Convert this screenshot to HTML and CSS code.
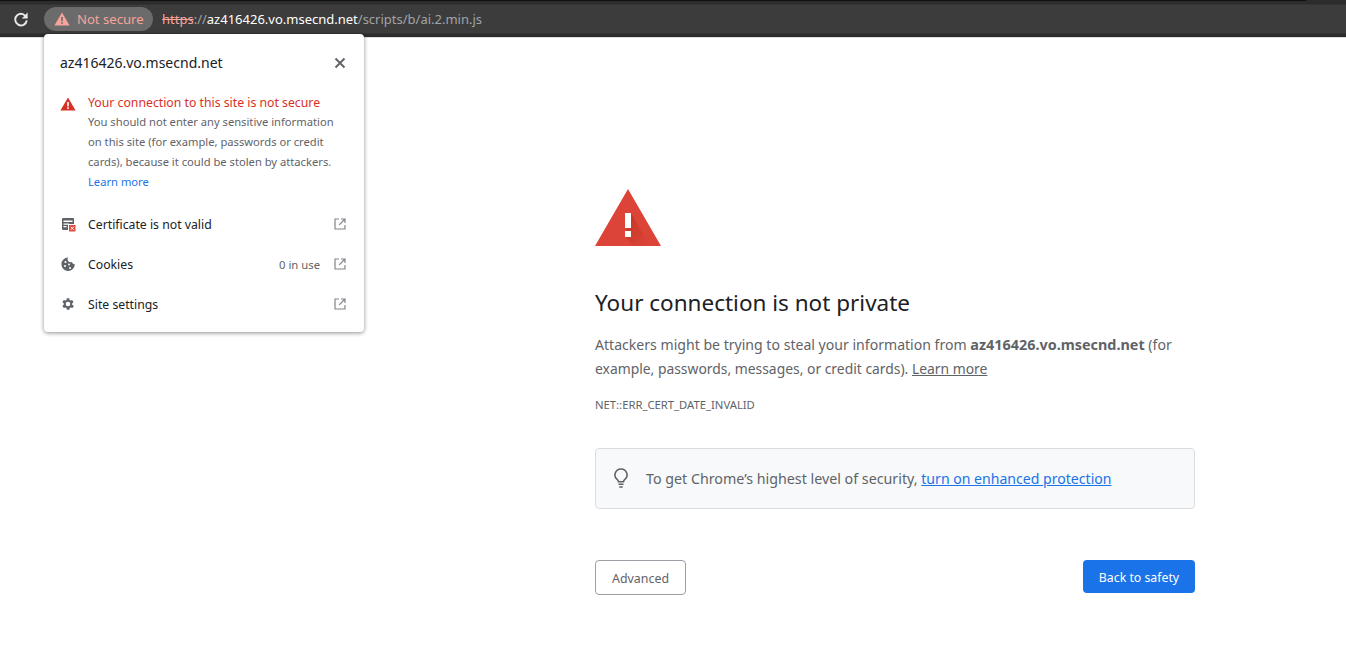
FILE: index.html
```html
<!DOCTYPE html>
<html lang="en">
<head>
<meta charset="utf-8">
<title>Privacy error</title>
<link rel="stylesheet" href="styles.css">
</head>
<body>
<header class="toolbar">
  <svg class="reload" viewBox="0 0 16 16" width="16" height="16"><path d="M13.6 6.9A5.8 5.8 0 1 0 13.8 9.4" fill="none" stroke="#e8eaed" stroke-width="1.9"/><path d="M14.6 1.6v5.8H8.8z" fill="#e8eaed"/></svg>
  <div class="chip">
    <svg class="chip-icon" viewBox="0 0 16 14" width="16" height="14"><path d="M8 0.5 15.6 13.5H0.4z" fill="#f6a49c"/><rect x="7.2" y="5" width="1.6" height="4.4" fill="#6b6b6b"/><rect x="7.2" y="10.3" width="1.6" height="1.6" fill="#6b6b6b"/></svg>
    <span class="chip-text">Not secure</span>
  </div>
  <div class="url"><span class="scheme">https</span><span class="dim">://</span><span class="host">az416426.vo.msecnd.net</span><span class="dim">/scripts/b/ai.2.min.js</span></div>
</header>

<aside class="popup">
  <div class="popup-head">
    <span class="popup-host">az416426.vo.msecnd.net</span>
    <svg class="popup-close" viewBox="0 0 12 12" width="12" height="12"><path d="M1.5 1.5l9 9M10.5 1.5l-9 9" stroke="#5f6368" stroke-width="1.9" fill="none"/></svg>
  </div>
  <div class="security">
    <svg class="sec-icon" viewBox="0 0 16 14" width="16" height="14"><path d="M8 0.5 15.6 13.5H0.4z" fill="#d93025"/><rect x="7.2" y="5" width="1.6" height="4.4" fill="#fff"/><rect x="7.2" y="10.3" width="1.6" height="1.6" fill="#fff"/></svg>
    <div class="sec-body">
      <div class="sec-title">Your connection to this site is not secure</div>
      <div class="sec-text">You should not enter any sensitive information on this site (for example, passwords or credit cards), because it could be stolen by attackers.</div>
      <a class="sec-link">Learn more</a>
    </div>
  </div>
  <div class="pop-row">
    <svg class="row-icon" viewBox="0 0 16 16" width="16" height="16"><rect x="2" y="2" width="12" height="12" rx="1" fill="#5f6368"/><path d="M3.5 4.5h9v1.4h-9zM3.5 7.5H9v1.3H3.5zM3.5 10h3v1.3h-3z" fill="#fff"/><rect x="8.5" y="8.5" width="7.5" height="7.5" fill="#e04b3f" stroke="#fff" stroke-width="1"/><path d="M10.800 10.800l3 3M13.800 10.800l-3 3" stroke="#fff" stroke-width="1"/></svg>
    <span class="row-label">Certificate is not valid</span>
    <svg class="ext" viewBox="0 0 12 12" width="12" height="12"><path d="M5 1H1v10h10V7" fill="none" stroke="#80868b" stroke-width="1.2"/><path d="M7 1h4v4M11 1 5.2 6.8" fill="none" stroke="#80868b" stroke-width="1.2"/></svg>
  </div>
  <div class="pop-row">
    <svg class="row-icon" viewBox="0 0 16 16" width="16" height="16"><path d="M8 1.5a6.7 6.7 0 1 0 6.8 6.8 3 3 0 0 1-2.900-2.300A3.100 3.100 0 0 1 8 1.500z" fill="#5f6368"/><circle cx="5.500" cy="6" r="1.100" fill="#fff"/><circle cx="5" cy="10" r="1" fill="#fff"/><circle cx="9" cy="8.500" r="0.900" fill="#fff"/><circle cx="10" cy="12" r="1" fill="#fff"/></svg>
    <span class="row-label">Cookies</span>
    <span class="row-meta">0 in use</span>
    <svg class="ext" viewBox="0 0 12 12" width="12" height="12"><path d="M5 1H1v10h10V7" fill="none" stroke="#80868b" stroke-width="1.2"/><path d="M7 1h4v4M11 1 5.2 6.8" fill="none" stroke="#80868b" stroke-width="1.2"/></svg>
  </div>
  <div class="pop-row">
    <svg class="row-icon" viewBox="0 0 24 24" width="16" height="16"><path fill="#5f6368" fill-rule="evenodd" d="M19.400 13a7.600 7.600 0 0 0 0-2l2.100-1.600-2-3.500-2.500 1a7.300 7.300 0 0 0-1.700-1L15.400 3.200h-4l-.4 2.700a7.300 7.300 0 0 0-1.700 1l-2.500-1-2 3.500L6.900 11a7.600 7.600 0 0 0 0 2l-2.100 1.600 2 3.500 2.500-1c.5.400 1.100.7 1.700 1l.4 2.700h4l.4-2.700c.6-.3 1.200-.6 1.700-1l2.500 1 2-3.500zM13.200 15.500a3.500 3.500 0 1 1 0-7 3.500 3.500 0 0 1 0 7z" transform="translate(-1.200 0)"/></svg>
    <span class="row-label">Site settings</span>
    <svg class="ext" viewBox="0 0 12 12" width="12" height="12"><path d="M5 1H1v10h10V7" fill="none" stroke="#80868b" stroke-width="1.2"/><path d="M7 1h4v4M11 1 5.2 6.8" fill="none" stroke="#80868b" stroke-width="1.2"/></svg>
  </div>
</aside>

<main class="interstitial">
  <svg class="alert" viewBox="0 0 66 57" width="66" height="57">
    <defs><linearGradient id="alert-shade" x1="0.100" y1="0" x2="0.800" y2="1"><stop offset="0" stop-color="#a52714" stop-opacity=".5"/><stop offset="1" stop-color="#a52714" stop-opacity="0"/></linearGradient></defs>
    <path d="M33 0 66 57H0z" fill="#db4437"/>
    <path d="M36 24 55 57H38L30 47z" fill="url(#alert-shade)"/>
    <rect x="30" y="24" width="6" height="15" fill="#fff"/>
    <rect x="30" y="42" width="6" height="6" fill="#fff"/>
  </svg>
  <h1 class="title">Your connection is not private</h1>
  <p class="desc">Attackers might be trying to steal your information from <strong>az416426.vo.msecnd.net</strong> (for <span class="desc-tail">example, passwords, messages, or credit cards). <a class="desc-link">Learn more</a></span></p>
  <div class="code">NET::ERR_CERT_DATE_INVALID</div>
  <div class="notice">
    <svg class="bulb" viewBox="0 0 16 22" width="16" height="22"><path d="M8 2a6 6 0 0 0-3.500 10.900c.6.500 1 1.100 1 1.900h5c0-.8.400-1.400 1-1.900A6 6 0 0 0 8 2z" fill="none" stroke="#5f6368" stroke-width="1.600"/><path d="M5.500 17.200h5M6.300 20h3.400" stroke="#5f6368" stroke-width="1.600" fill="none"/></svg>
    <span class="notice-text">To get Chrome’s highest level of security, <a class="notice-link">turn on enhanced protection</a></span>
  </div>
  <div class="actions">
    <button class="btn-adv">Advanced</button>
    <button class="btn-safe">Back to safety</button>
  </div>
</main>
</body>
</html>
```
FILE: styles.css
```css
* { box-sizing: border-box; }
html, body { margin: 0; padding: 0; }
body {
  width: 1346px;
  height: 672px;
  overflow: hidden;
  background: #fff;
  font-family: "Noto Sans", "Open Sans", "Liberation Sans", sans-serif;
  position: relative;
}
.toolbar {
  height: 38px;
  background:
    linear-gradient(#111, #111) no-repeat 0 0 / 1306px 1px,
    linear-gradient(#2c2c2c 0, #2c2c2c 4px, #3c3c3c 5px, #3c3c3c 33px, #2c2c2c 34px, #2c2c2c 37px, #dcdcdc 37px);
  display: flex;
  align-items: center;
  padding: 0 0 0 13px;
}
.reload { flex: none; }
.chip {
  margin-left: 15px;
  width: 109px;
  height: 24px;
  border-radius: 12px;
  background: #6b6b6b;
  display: flex;
  align-items: center;
  padding-left: 10px;
  gap: 7px;
}
.chip-text { color: #f6a49c; font-size: 13.1px; }
.url { margin-left: 9px; font-size: 13px; color: #a0a4a8; white-space: nowrap; }
.scheme { color: #f6a49c; text-decoration: line-through; }
.host { color: #fff; }
.popup {
  position: absolute;
  left: 44px;
  top: 34px;
  width: 320px;
  height: 298px;
  background: #fff;
  border-radius: 4px;
  box-shadow: 0 1px 4px rgba(0,0,0,.45);
  padding: 0 18px 0 16px;
}
.popup-head {
  display: flex;
  justify-content: space-between;
  align-items: center;
  height: 57px;
}
.popup-host { font-size: 14px; color: #202124; }
.security { display: flex; gap: 12px; margin-top: 2px; }
.sec-icon { flex: none; margin-top: 4px; }
.sec-body { width: 248px; }
.sec-title { font-size: 12.25px; color: #d93025; line-height: 19px; white-space: nowrap; }
.sec-text { font-size: 11.2px; color: #5f6368; line-height: 20px; }
.sec-link { font-size: 11.2px; color: #1a73e8; line-height: 20px; display: block; }
.pop-row {
  display: flex;
  align-items: center;
  height: 40px;
  gap: 12px;
}
.security + .pop-row { margin-top: 12px; }
.row-icon { flex: none; }
.row-label { font-size: 12.25px; color: #202124; flex: 1; }
.row-meta { font-size: 11.3px; color: #5f6368; margin-right: 2px; }
.ext { flex: none; }
.interstitial {
  margin: 151px 0 0 595px;
  width: 600px;
}
.alert { display: block; }
.title {
  margin: 40px 0 0;
  font-size: 22.5px;
  font-weight: 400;
  line-height: 34px;
  color: #202124;
}
.desc {
  margin: 13px 0 0;
  font-size: 14.08px;
  line-height: 24px;
  color: #5f6368;
}
.desc strong { font-weight: 700; font-size: 14.4px; }
.desc-tail { font-size: 13.88px; }
.desc-link { text-decoration: underline; }
.code {
  margin-top: 16px;
  font-size: 11.27px;
  line-height: 16px;
  color: #5f6368;
}
.notice {
  margin-top: 35px;
  height: 61px;
  border: 1px solid #dadce0;
  border-radius: 4px;
  background: #f8f9fa;
  display: flex;
  align-items: center;
  padding-left: 17px;
  gap: 17px;
}
.bulb { flex: none; margin-bottom: 2px; }
.notice-text { font-size: 14.25px; color: #5f6368; }
.notice-link { font-size: 14.08px; color: #1a73e8; text-decoration: underline; }
.actions {
  margin-top: 51px;
  display: flex;
  justify-content: space-between;
  align-items: flex-start;
}
.btn-adv {
  width: 91px;
  height: 35px;
  border: 1px solid #9aa0a6;
  border-radius: 4px;
  background: #fff;
  color: #5f6368;
  font: inherit;
  font-size: 12.4px;
  padding: 1px 0 0;
}
.btn-safe {
  width: 112px;
  height: 33px;
  border: 0;
  border-radius: 4px;
  background: #1a73e8;
  color: #fff;
  font: inherit;
  font-size: 12.3px;
  padding: 1px 0 0;
}
```
